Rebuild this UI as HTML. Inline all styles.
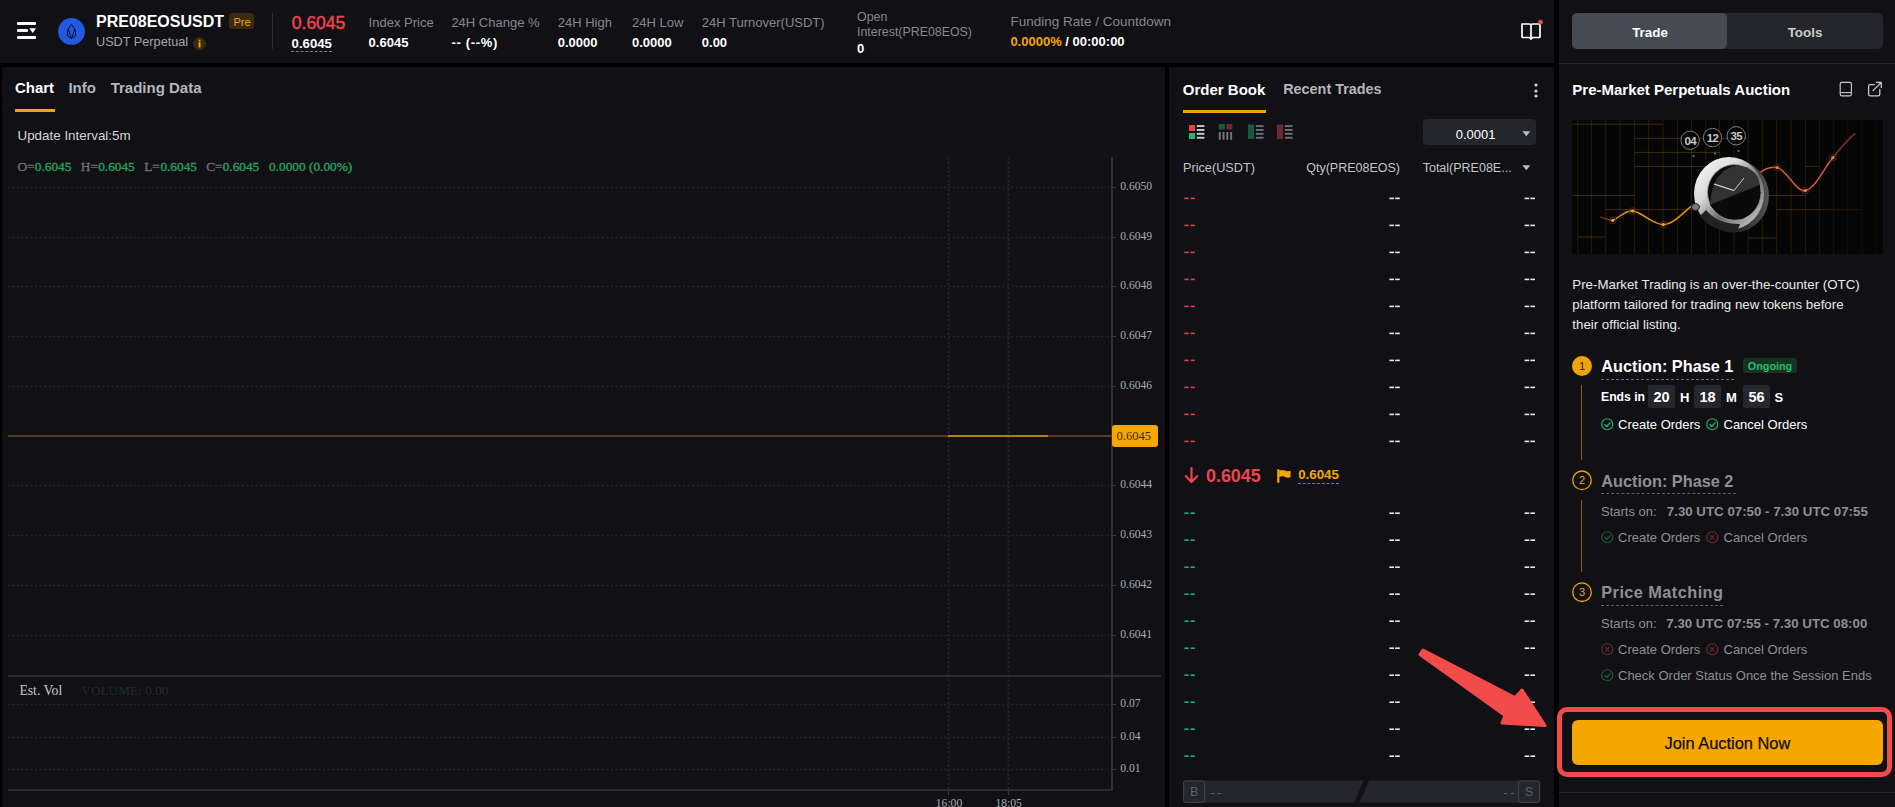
<!DOCTYPE html>
<html><head><meta charset="utf-8"><title>PRE08EOSUSDT</title>
<style>
html,body{margin:0;padding:0;}
body{width:1895px;height:807px;overflow:hidden;background:#000;position:relative;font-family:'Liberation Sans', sans-serif;}
.t{position:absolute;white-space:nowrap;}
.r{position:absolute;}
svg{position:absolute;overflow:visible;}
</style></head><body>

<div class="r" style="left:0px;top:0px;width:1554px;height:63px;background:#111115;"></div>
<div class="r" style="left:2px;top:67px;width:1163px;height:740px;background:#111115;"></div>
<div class="r" style="left:1169px;top:67px;width:385px;height:740px;background:#111115;"></div>
<div class="r" style="left:1559px;top:0px;width:336px;height:807px;background:#111115;"></div>
<div class="r" style="left:17px;top:22px;width:19px;height:2.5px;background:#fff;border-radius:1px;"></div>
<div class="r" style="left:17px;top:29.3px;width:11px;height:2.5px;background:#fff;border-radius:1px;"></div>
<div class="r" style="left:17px;top:36.3px;width:19px;height:2.5px;background:#fff;border-radius:1px;"></div>
<svg style="left:29px;top:27.8px" width="8" height="6"><path d="M0.3 0.3 L7.1 0.3 L3.7 5 Z" fill="#fff"/></svg>
<svg style="left:58px;top:18px" width="27" height="27" viewBox="0 0 27 27">
<circle cx="13.5" cy="13.4" r="13.4" fill="#2259e0"/>
<path d="M13.5 6.4 L10.1 11 L9.1 17.4 L13.5 20.5 L17.9 17.4 L16.9 11 Z M10.1 11 L13.5 20.5 L16.9 11" fill="none" stroke="#06091a" stroke-width="0.95" stroke-linejoin="round"/>
</svg>
<div class="t" style="left:96px;top:13.56px;font-size:16px;line-height:16px;color:#fff;font-weight:bold;font-family:'Liberation Sans', sans-serif;">PRE08EOSUSDT</div>
<div class="r" style="left:229px;top:13px;width:25px;height:16px;background:#3a2a0e;border-radius:3px;"></div>
<div class="t" style="left:233.5px;top:16.96px;font-size:11px;line-height:11px;color:#f7a600;font-weight:normal;font-family:'Liberation Sans', sans-serif;">Pre</div>
<div class="t" style="left:96px;top:36.19px;font-size:12.7px;line-height:12.7px;color:#a3a5aa;font-weight:normal;font-family:'Liberation Sans', sans-serif;">USDT Perpetual</div>
<svg style="left:192.5px;top:37px" width="13" height="13"><circle cx="6.5" cy="6.5" r="6.5" fill="#3a2a0e"/><rect x="5.6" y="5.2" width="1.9" height="5.3" fill="#f7a600"/><rect x="5.6" y="2.6" width="1.9" height="1.8" fill="#f7a600"/></svg>
<div class="r" style="left:272px;top:13px;width:1px;height:36px;background:#2c2d33;"></div>
<div class="t" style="left:291.8px;top:15.33px;font-size:17.5px;line-height:17.5px;color:#f0434f;font-weight:normal;font-family:'Liberation Sans', sans-serif;-webkit-text-stroke:0.45px #f0434f;">0.6045</div>
<div class="t" style="left:291.6px;top:37.21px;font-size:13.2px;line-height:13.2px;color:#fff;font-weight:bold;font-family:'Liberation Sans', sans-serif;">0.6045</div>
<div class="r" style="left:291px;top:51px;width:41px;height:0;border-top:1px dashed #7a7c82"></div>
<div class="t" style="left:368.6px;top:15.54px;font-size:13px;line-height:13px;color:#85878d;font-weight:normal;font-family:'Liberation Sans', sans-serif;">Index Price</div>
<div class="t" style="left:368.6px;top:35.54px;font-size:13px;line-height:13px;color:#fff;font-weight:bold;font-family:'Liberation Sans', sans-serif;">0.6045</div>
<div class="t" style="left:451.4px;top:15.54px;font-size:13px;line-height:13px;color:#85878d;font-weight:normal;font-family:'Liberation Sans', sans-serif;">24H Change %</div>
<div class="t" style="left:451.4px;top:35.54px;font-size:13px;line-height:13px;color:#fff;font-weight:bold;font-family:'Liberation Sans', sans-serif;letter-spacing:0.7px;">-- (--%)</div>
<div class="t" style="left:557.7px;top:15.54px;font-size:13px;line-height:13px;color:#85878d;font-weight:normal;font-family:'Liberation Sans', sans-serif;">24H High</div>
<div class="t" style="left:557.7px;top:35.54px;font-size:13px;line-height:13px;color:#fff;font-weight:bold;font-family:'Liberation Sans', sans-serif;">0.0000</div>
<div class="t" style="left:632px;top:15.54px;font-size:13px;line-height:13px;color:#85878d;font-weight:normal;font-family:'Liberation Sans', sans-serif;">24H Low</div>
<div class="t" style="left:632px;top:35.54px;font-size:13px;line-height:13px;color:#fff;font-weight:bold;font-family:'Liberation Sans', sans-serif;">0.0000</div>
<div class="t" style="left:701.8px;top:15.54px;font-size:13px;line-height:13px;color:#85878d;font-weight:normal;font-family:'Liberation Sans', sans-serif;">24H Turnover(USDT)</div>
<div class="t" style="left:701.8px;top:35.54px;font-size:13px;line-height:13px;color:#fff;font-weight:bold;font-family:'Liberation Sans', sans-serif;">0.00</div>
<div class="t" style="left:857px;top:11.13px;font-size:12.4px;line-height:12.4px;color:#85878d;font-weight:normal;font-family:'Liberation Sans', sans-serif;">Open</div>
<div class="t" style="left:857px;top:25.53px;font-size:12.4px;line-height:12.4px;color:#85878d;font-weight:normal;font-family:'Liberation Sans', sans-serif;">Interest(PRE08EOS)</div>
<div class="t" style="left:857px;top:42.44px;font-size:13px;line-height:13px;color:#fff;font-weight:bold;font-family:'Liberation Sans', sans-serif;">0</div>
<div class="t" style="left:1010.4px;top:15.46px;font-size:13.5px;line-height:13.5px;color:#85878d;font-weight:normal;font-family:'Liberation Sans', sans-serif;">Funding Rate / Countdown</div>
<div class="t" style="left:1010.4px;top:35.34px;font-size:13px;line-height:13px;color:#fff;font-weight:bold;font-family:'Liberation Sans', sans-serif;"><span style="color:#f7a600">0.0000%</span> / 00:00:00</div>
<svg style="left:1520px;top:20px" width="24" height="22" viewBox="0 0 24 22">
<path d="M2 4 H9.5 Q11 4 11 5.5 V17.5 H2.8 Q2 17.5 2 16.7 Z M11 5.5 Q11 4 12.5 4 H19.2 Q20 4 20 4.8 V16.7 Q20 17.5 19.2 17.5 H11" fill="none" stroke="#fff" stroke-width="1.7" stroke-linejoin="round"/>
<path d="M9.3 17.5 L11 19.2 L12.7 17.5" fill="none" stroke="#fff" stroke-width="1.5"/>
<circle cx="20.5" cy="2.2" r="2.4" fill="#f0434f"/>
</svg>
<div class="t" style="left:14.9px;top:80.42px;font-size:15px;line-height:15px;color:#fff;font-weight:bold;font-family:'Liberation Sans', sans-serif;">Chart</div>
<div class="t" style="left:68.4px;top:80.42px;font-size:15px;line-height:15px;color:#b4b6bb;font-weight:bold;font-family:'Liberation Sans', sans-serif;">Info</div>
<div class="t" style="left:110.7px;top:80.42px;font-size:15px;line-height:15px;color:#b4b6bb;font-weight:bold;font-family:'Liberation Sans', sans-serif;">Trading Data</div>
<div class="r" style="left:15px;top:109px;width:39.5px;height:3px;background:#f0a30a;"></div>
<div class="t" style="left:17.5px;top:129.18px;font-size:13.4px;line-height:13.4px;color:#d2d4d8;font-weight:normal;font-family:'Liberation Sans', sans-serif;">Update Interval:5m</div>
<div class="t" style="left:17.5px;top:159.57px;font-size:13.3px;line-height:13.3px;color:#6c6f76;font-weight:normal;font-family:'Liberation Serif', serif;-webkit-text-stroke:0.35px #6c6f76;">O=</div>
<div class="t" style="left:34.8px;top:159.57px;font-size:13.3px;line-height:13.3px;color:#25a35e;font-weight:normal;font-family:'Liberation Serif', serif;-webkit-text-stroke:0.35px #25a35e;">0.6045</div>
<div class="t" style="left:80.8px;top:159.57px;font-size:13.3px;line-height:13.3px;color:#6c6f76;font-weight:normal;font-family:'Liberation Serif', serif;-webkit-text-stroke:0.35px #6c6f76;">H=</div>
<div class="t" style="left:98.2px;top:159.57px;font-size:13.3px;line-height:13.3px;color:#25a35e;font-weight:normal;font-family:'Liberation Serif', serif;-webkit-text-stroke:0.35px #25a35e;">0.6045</div>
<div class="t" style="left:144.2px;top:159.57px;font-size:13.3px;line-height:13.3px;color:#6c6f76;font-weight:normal;font-family:'Liberation Serif', serif;-webkit-text-stroke:0.35px #6c6f76;">L=</div>
<div class="t" style="left:160.4px;top:159.57px;font-size:13.3px;line-height:13.3px;color:#25a35e;font-weight:normal;font-family:'Liberation Serif', serif;-webkit-text-stroke:0.35px #25a35e;">0.6045</div>
<div class="t" style="left:206.2px;top:159.57px;font-size:13.3px;line-height:13.3px;color:#6c6f76;font-weight:normal;font-family:'Liberation Serif', serif;-webkit-text-stroke:0.35px #6c6f76;">C=</div>
<div class="t" style="left:222.7px;top:159.57px;font-size:13.3px;line-height:13.3px;color:#25a35e;font-weight:normal;font-family:'Liberation Serif', serif;-webkit-text-stroke:0.35px #25a35e;">0.6045</div>
<div class="t" style="left:269.1px;top:159.57px;font-size:13.3px;line-height:13.3px;color:#25a35e;font-weight:normal;font-family:'Liberation Serif', serif;-webkit-text-stroke:0.35px #25a35e;">0.0000 (0.00%)</div>
<svg style="left:0;top:0" width="1895" height="807"><line x1="8" y1="187.5" x2="1112" y2="187.5" stroke="#232429" stroke-width="1.3" stroke-dasharray="2 2.5"/><line x1="1112" y1="187.5" x2="1116" y2="187.5" stroke="#3a3b40" stroke-width="1"/><line x1="8" y1="237.5" x2="1112" y2="237.5" stroke="#232429" stroke-width="1.3" stroke-dasharray="2 2.5"/><line x1="1112" y1="237.5" x2="1116" y2="237.5" stroke="#3a3b40" stroke-width="1"/><line x1="8" y1="286.5" x2="1112" y2="286.5" stroke="#232429" stroke-width="1.3" stroke-dasharray="2 2.5"/><line x1="1112" y1="286.5" x2="1116" y2="286.5" stroke="#3a3b40" stroke-width="1"/><line x1="8" y1="336.5" x2="1112" y2="336.5" stroke="#232429" stroke-width="1.3" stroke-dasharray="2 2.5"/><line x1="1112" y1="336.5" x2="1116" y2="336.5" stroke="#3a3b40" stroke-width="1"/><line x1="8" y1="386.5" x2="1112" y2="386.5" stroke="#232429" stroke-width="1.3" stroke-dasharray="2 2.5"/><line x1="1112" y1="386.5" x2="1116" y2="386.5" stroke="#3a3b40" stroke-width="1"/><line x1="8" y1="436.5" x2="1112" y2="436.5" stroke="#232429" stroke-width="1.3" stroke-dasharray="2 2.5"/><line x1="8" y1="485.5" x2="1112" y2="485.5" stroke="#232429" stroke-width="1.3" stroke-dasharray="2 2.5"/><line x1="1112" y1="485.5" x2="1116" y2="485.5" stroke="#3a3b40" stroke-width="1"/><line x1="8" y1="535.5" x2="1112" y2="535.5" stroke="#232429" stroke-width="1.3" stroke-dasharray="2 2.5"/><line x1="1112" y1="535.5" x2="1116" y2="535.5" stroke="#3a3b40" stroke-width="1"/><line x1="8" y1="585.5" x2="1112" y2="585.5" stroke="#232429" stroke-width="1.3" stroke-dasharray="2 2.5"/><line x1="1112" y1="585.5" x2="1116" y2="585.5" stroke="#3a3b40" stroke-width="1"/><line x1="8" y1="635.5" x2="1112" y2="635.5" stroke="#232429" stroke-width="1.3" stroke-dasharray="2 2.5"/><line x1="1112" y1="635.5" x2="1116" y2="635.5" stroke="#3a3b40" stroke-width="1"/><line x1="8" y1="704.5" x2="1112" y2="704.5" stroke="#232429" stroke-width="1.3" stroke-dasharray="2 2.5"/><line x1="1112" y1="704.5" x2="1116" y2="704.5" stroke="#3a3b40" stroke-width="1"/><line x1="8" y1="737.5" x2="1112" y2="737.5" stroke="#232429" stroke-width="1.3" stroke-dasharray="2 2.5"/><line x1="1112" y1="737.5" x2="1116" y2="737.5" stroke="#3a3b40" stroke-width="1"/><line x1="8" y1="769.5" x2="1112" y2="769.5" stroke="#232429" stroke-width="1.3" stroke-dasharray="2 2.5"/><line x1="1112" y1="769.5" x2="1116" y2="769.5" stroke="#3a3b40" stroke-width="1"/><line x1="948.5" y1="157" x2="948.5" y2="789" stroke="#22232a" stroke-width="2" stroke-dasharray="2.5 2"/><line x1="948.5" y1="790" x2="948.5" y2="795" stroke="#3a3b40" stroke-width="1"/><line x1="1008.5" y1="157" x2="1008.5" y2="789" stroke="#22232a" stroke-width="2" stroke-dasharray="2.5 2"/><line x1="1008.5" y1="790" x2="1008.5" y2="795" stroke="#3a3b40" stroke-width="1"/><line x1="1112" y1="157" x2="1112" y2="790" stroke="#35363b" stroke-width="1.8"/><line x1="8" y1="676" x2="1161" y2="676" stroke="#35363b" stroke-width="1.6"/><line x1="8" y1="790" x2="1113" y2="790" stroke="#35363b" stroke-width="1.6"/><line x1="8" y1="436" x2="1112" y2="436" stroke="#55401a" stroke-width="2"/><line x1="948" y1="436" x2="1048" y2="436" stroke="#b57d12" stroke-width="2"/></svg>
<div class="t" style="left:1120.2px;top:181.38px;font-size:11.6px;line-height:11.6px;color:#a9abb0;font-weight:normal;font-family:'Liberation Serif', serif;">0.6050</div>
<div class="t" style="left:1120.2px;top:231.38px;font-size:11.6px;line-height:11.6px;color:#a9abb0;font-weight:normal;font-family:'Liberation Serif', serif;">0.6049</div>
<div class="t" style="left:1120.2px;top:280.38px;font-size:11.6px;line-height:11.6px;color:#a9abb0;font-weight:normal;font-family:'Liberation Serif', serif;">0.6048</div>
<div class="t" style="left:1120.2px;top:330.38px;font-size:11.6px;line-height:11.6px;color:#a9abb0;font-weight:normal;font-family:'Liberation Serif', serif;">0.6047</div>
<div class="t" style="left:1120.2px;top:380.38px;font-size:11.6px;line-height:11.6px;color:#a9abb0;font-weight:normal;font-family:'Liberation Serif', serif;">0.6046</div>
<div class="t" style="left:1120.2px;top:479.38px;font-size:11.6px;line-height:11.6px;color:#a9abb0;font-weight:normal;font-family:'Liberation Serif', serif;">0.6044</div>
<div class="t" style="left:1120.2px;top:529.38px;font-size:11.6px;line-height:11.6px;color:#a9abb0;font-weight:normal;font-family:'Liberation Serif', serif;">0.6043</div>
<div class="t" style="left:1120.2px;top:579.38px;font-size:11.6px;line-height:11.6px;color:#a9abb0;font-weight:normal;font-family:'Liberation Serif', serif;">0.6042</div>
<div class="t" style="left:1120.2px;top:629.38px;font-size:11.6px;line-height:11.6px;color:#a9abb0;font-weight:normal;font-family:'Liberation Serif', serif;">0.6041</div>
<div class="t" style="left:1120.2px;top:698.38px;font-size:11.6px;line-height:11.6px;color:#a9abb0;font-weight:normal;font-family:'Liberation Serif', serif;">0.07</div>
<div class="t" style="left:1120.2px;top:731.38px;font-size:11.6px;line-height:11.6px;color:#a9abb0;font-weight:normal;font-family:'Liberation Serif', serif;">0.04</div>
<div class="t" style="left:1120.2px;top:763.38px;font-size:11.6px;line-height:11.6px;color:#a9abb0;font-weight:normal;font-family:'Liberation Serif', serif;">0.01</div>
<div class="r" style="left:1111.6px;top:424.8px;width:46.4px;height:22.4px;background:#f7a600;border-radius:3px;"></div>
<div class="t" style="left:1116.5px;top:430.22px;font-size:12.5px;line-height:12.5px;color:#3a2a08;font-weight:normal;font-family:'Liberation Serif', serif;">0.6045</div>
<div class="t" style="left:949px;transform:translateX(-50%);top:798.38px;font-size:11.6px;line-height:11.6px;color:#a9abb0;font-weight:normal;font-family:'Liberation Serif', serif;">16:00</div>
<div class="t" style="left:1008.6px;transform:translateX(-50%);top:798.38px;font-size:11.6px;line-height:11.6px;color:#a9abb0;font-weight:normal;font-family:'Liberation Serif', serif;">18:05</div>
<div class="t" style="left:19.4px;top:684.00px;font-size:13.7px;line-height:13.7px;color:#c4c5c9;font-weight:normal;font-family:'Liberation Serif', serif;">Est. Vol</div>
<div class="t" style="left:81.3px;top:684.07px;font-size:13.3px;line-height:13.3px;color:#1a2f23;font-weight:normal;font-family:'Liberation Serif', serif;">VOLUME: 0.00</div>
<div class="t" style="left:1182.8px;top:81.72px;font-size:15px;line-height:15px;color:#fff;font-weight:bold;font-family:'Liberation Sans', sans-serif;">Order Book</div>
<div class="t" style="left:1283.2px;top:82.42px;font-size:14.4px;line-height:14.4px;color:#b4b6bb;font-weight:bold;font-family:'Liberation Sans', sans-serif;">Recent Trades</div>
<div class="r" style="left:1183px;top:110px;width:82.5px;height:2.6px;background:#f0a30a;"></div>
<svg style="left:1533.5px;top:83px" width="4" height="4"><circle cx="2" cy="2" r="1.6" fill="#d0d2d6"/></svg>
<svg style="left:1533.5px;top:88.5px" width="4" height="4"><circle cx="2" cy="2" r="1.6" fill="#d0d2d6"/></svg>
<svg style="left:1533.5px;top:94px" width="4" height="4"><circle cx="2" cy="2" r="1.6" fill="#d0d2d6"/></svg>
<svg style="left:0;top:0" width="1895" height="807"><rect x="1189" y="125" width="6" height="6" fill="#e9404a"/><rect x="1189" y="133" width="6" height="6" fill="#25b673"/><rect x="1196.8" y="125.1" width="7.6" height="1.9" fill="#c9cbd0"/><rect x="1196.8" y="129.0" width="7.6" height="1.9" fill="#c9cbd0"/><rect x="1196.8" y="132.9" width="7.6" height="1.9" fill="#c9cbd0"/><rect x="1196.8" y="136.8" width="7.6" height="1.9" fill="#c9cbd0"/><rect x="1218.8" y="124" width="6" height="5.5" fill="#195a3b"/><rect x="1226.4" y="124" width="6" height="5.5" fill="#6c2a2e"/><rect x="1218.8" y="132" width="1.9" height="7.8" fill="#76787d"/><rect x="1222.6" y="132" width="1.9" height="7.8" fill="#76787d"/><rect x="1226.4" y="132" width="1.9" height="7.8" fill="#76787d"/><rect x="1230.2" y="132" width="1.9" height="7.8" fill="#76787d"/><rect x="1248" y="124.5" width="6" height="14.5" fill="#195a3b"/><rect x="1255.8" y="125.1" width="7.8" height="1.9" fill="#6f7176"/><rect x="1255.8" y="129.0" width="7.8" height="1.9" fill="#6f7176"/><rect x="1255.8" y="132.9" width="7.8" height="1.9" fill="#6f7176"/><rect x="1255.8" y="136.8" width="7.8" height="1.9" fill="#6f7176"/><rect x="1277" y="124.5" width="6" height="14.5" fill="#6c2a2e"/><rect x="1284.8" y="125.1" width="7.8" height="1.9" fill="#6f7176"/><rect x="1284.8" y="129.0" width="7.8" height="1.9" fill="#6f7176"/><rect x="1284.8" y="132.9" width="7.8" height="1.9" fill="#6f7176"/><rect x="1284.8" y="136.8" width="7.8" height="1.9" fill="#6f7176"/></svg>
<div class="r" style="left:1423.2px;top:118.7px;width:112.8px;height:26.8px;background:#24262b;border-radius:4px;"></div>
<div class="t" style="left:1455.7px;top:127.64px;font-size:13px;line-height:13px;color:#fff;font-weight:normal;font-family:'Liberation Sans', sans-serif;">0.0001</div>
<svg style="left:1521.5px;top:130.5px" width="9" height="6"><path d="M0.3 0.3 H8.3 L4.3 5.2 Z" fill="#b8bac0"/></svg>
<div class="t" style="left:1183px;top:161.79px;font-size:12.7px;line-height:12.7px;color:#c2c4c9;font-weight:normal;font-family:'Liberation Sans', sans-serif;">Price(USDT)</div>
<div class="t" style="left:1306.2px;top:161.82px;font-size:12.5px;line-height:12.5px;color:#c2c4c9;font-weight:normal;font-family:'Liberation Sans', sans-serif;">Qty(PRE08EOS)</div>
<div class="t" style="left:1422.7px;top:161.82px;font-size:12.5px;line-height:12.5px;color:#c2c4c9;font-weight:normal;font-family:'Liberation Sans', sans-serif;">Total(PRE08E...</div>
<svg style="left:1521.5px;top:164.5px" width="9" height="6"><path d="M0.3 0.3 H8.3 L4.3 5.2 Z" fill="#b8bac0"/></svg>
<svg style="left:0;top:0" width="1895" height="807"><rect x="1184.4" y="197.6" width="4.20" height="1.6" fill="#d8434c"/><rect x="1190.60" y="197.6" width="4.20" height="1.6" fill="#d8434c"/><rect x="1389.4" y="197.6" width="4.60" height="1.6" fill="#e8e8ea"/><rect x="1395.20" y="197.6" width="4.60" height="1.6" fill="#e8e8ea"/><rect x="1524.6" y="197.6" width="4.60" height="1.6" fill="#e8e8ea"/><rect x="1530.40" y="197.6" width="4.60" height="1.6" fill="#e8e8ea"/><rect x="1184.4" y="224.6" width="4.20" height="1.6" fill="#d8434c"/><rect x="1190.60" y="224.6" width="4.20" height="1.6" fill="#d8434c"/><rect x="1389.4" y="224.6" width="4.60" height="1.6" fill="#e8e8ea"/><rect x="1395.20" y="224.6" width="4.60" height="1.6" fill="#e8e8ea"/><rect x="1524.6" y="224.6" width="4.60" height="1.6" fill="#e8e8ea"/><rect x="1530.40" y="224.6" width="4.60" height="1.6" fill="#e8e8ea"/><rect x="1184.4" y="251.6" width="4.20" height="1.6" fill="#d8434c"/><rect x="1190.60" y="251.6" width="4.20" height="1.6" fill="#d8434c"/><rect x="1389.4" y="251.6" width="4.60" height="1.6" fill="#e8e8ea"/><rect x="1395.20" y="251.6" width="4.60" height="1.6" fill="#e8e8ea"/><rect x="1524.6" y="251.6" width="4.60" height="1.6" fill="#e8e8ea"/><rect x="1530.40" y="251.6" width="4.60" height="1.6" fill="#e8e8ea"/><rect x="1184.4" y="278.6" width="4.20" height="1.6" fill="#d8434c"/><rect x="1190.60" y="278.6" width="4.20" height="1.6" fill="#d8434c"/><rect x="1389.4" y="278.6" width="4.60" height="1.6" fill="#e8e8ea"/><rect x="1395.20" y="278.6" width="4.60" height="1.6" fill="#e8e8ea"/><rect x="1524.6" y="278.6" width="4.60" height="1.6" fill="#e8e8ea"/><rect x="1530.40" y="278.6" width="4.60" height="1.6" fill="#e8e8ea"/><rect x="1184.4" y="305.6" width="4.20" height="1.6" fill="#d8434c"/><rect x="1190.60" y="305.6" width="4.20" height="1.6" fill="#d8434c"/><rect x="1389.4" y="305.6" width="4.60" height="1.6" fill="#e8e8ea"/><rect x="1395.20" y="305.6" width="4.60" height="1.6" fill="#e8e8ea"/><rect x="1524.6" y="305.6" width="4.60" height="1.6" fill="#e8e8ea"/><rect x="1530.40" y="305.6" width="4.60" height="1.6" fill="#e8e8ea"/><rect x="1184.4" y="332.6" width="4.20" height="1.6" fill="#d8434c"/><rect x="1190.60" y="332.6" width="4.20" height="1.6" fill="#d8434c"/><rect x="1389.4" y="332.6" width="4.60" height="1.6" fill="#e8e8ea"/><rect x="1395.20" y="332.6" width="4.60" height="1.6" fill="#e8e8ea"/><rect x="1524.6" y="332.6" width="4.60" height="1.6" fill="#e8e8ea"/><rect x="1530.40" y="332.6" width="4.60" height="1.6" fill="#e8e8ea"/><rect x="1184.4" y="359.6" width="4.20" height="1.6" fill="#d8434c"/><rect x="1190.60" y="359.6" width="4.20" height="1.6" fill="#d8434c"/><rect x="1389.4" y="359.6" width="4.60" height="1.6" fill="#e8e8ea"/><rect x="1395.20" y="359.6" width="4.60" height="1.6" fill="#e8e8ea"/><rect x="1524.6" y="359.6" width="4.60" height="1.6" fill="#e8e8ea"/><rect x="1530.40" y="359.6" width="4.60" height="1.6" fill="#e8e8ea"/><rect x="1184.4" y="386.6" width="4.20" height="1.6" fill="#d8434c"/><rect x="1190.60" y="386.6" width="4.20" height="1.6" fill="#d8434c"/><rect x="1389.4" y="386.6" width="4.60" height="1.6" fill="#e8e8ea"/><rect x="1395.20" y="386.6" width="4.60" height="1.6" fill="#e8e8ea"/><rect x="1524.6" y="386.6" width="4.60" height="1.6" fill="#e8e8ea"/><rect x="1530.40" y="386.6" width="4.60" height="1.6" fill="#e8e8ea"/><rect x="1184.4" y="413.6" width="4.20" height="1.6" fill="#d8434c"/><rect x="1190.60" y="413.6" width="4.20" height="1.6" fill="#d8434c"/><rect x="1389.4" y="413.6" width="4.60" height="1.6" fill="#e8e8ea"/><rect x="1395.20" y="413.6" width="4.60" height="1.6" fill="#e8e8ea"/><rect x="1524.6" y="413.6" width="4.60" height="1.6" fill="#e8e8ea"/><rect x="1530.40" y="413.6" width="4.60" height="1.6" fill="#e8e8ea"/><rect x="1184.4" y="440.6" width="4.20" height="1.6" fill="#d8434c"/><rect x="1190.60" y="440.6" width="4.20" height="1.6" fill="#d8434c"/><rect x="1389.4" y="440.6" width="4.60" height="1.6" fill="#e8e8ea"/><rect x="1395.20" y="440.6" width="4.60" height="1.6" fill="#e8e8ea"/><rect x="1524.6" y="440.6" width="4.60" height="1.6" fill="#e8e8ea"/><rect x="1530.40" y="440.6" width="4.60" height="1.6" fill="#e8e8ea"/><rect x="1184.4" y="512.4" width="4.20" height="1.6" fill="#22b06e"/><rect x="1190.60" y="512.4" width="4.20" height="1.6" fill="#22b06e"/><rect x="1389.4" y="512.4" width="4.60" height="1.6" fill="#e8e8ea"/><rect x="1395.20" y="512.4" width="4.60" height="1.6" fill="#e8e8ea"/><rect x="1524.6" y="512.4" width="4.60" height="1.6" fill="#e8e8ea"/><rect x="1530.40" y="512.4" width="4.60" height="1.6" fill="#e8e8ea"/><rect x="1184.4" y="539.4" width="4.20" height="1.6" fill="#22b06e"/><rect x="1190.60" y="539.4" width="4.20" height="1.6" fill="#22b06e"/><rect x="1389.4" y="539.4" width="4.60" height="1.6" fill="#e8e8ea"/><rect x="1395.20" y="539.4" width="4.60" height="1.6" fill="#e8e8ea"/><rect x="1524.6" y="539.4" width="4.60" height="1.6" fill="#e8e8ea"/><rect x="1530.40" y="539.4" width="4.60" height="1.6" fill="#e8e8ea"/><rect x="1184.4" y="566.4" width="4.20" height="1.6" fill="#22b06e"/><rect x="1190.60" y="566.4" width="4.20" height="1.6" fill="#22b06e"/><rect x="1389.4" y="566.4" width="4.60" height="1.6" fill="#e8e8ea"/><rect x="1395.20" y="566.4" width="4.60" height="1.6" fill="#e8e8ea"/><rect x="1524.6" y="566.4" width="4.60" height="1.6" fill="#e8e8ea"/><rect x="1530.40" y="566.4" width="4.60" height="1.6" fill="#e8e8ea"/><rect x="1184.4" y="593.4" width="4.20" height="1.6" fill="#22b06e"/><rect x="1190.60" y="593.4" width="4.20" height="1.6" fill="#22b06e"/><rect x="1389.4" y="593.4" width="4.60" height="1.6" fill="#e8e8ea"/><rect x="1395.20" y="593.4" width="4.60" height="1.6" fill="#e8e8ea"/><rect x="1524.6" y="593.4" width="4.60" height="1.6" fill="#e8e8ea"/><rect x="1530.40" y="593.4" width="4.60" height="1.6" fill="#e8e8ea"/><rect x="1184.4" y="620.4" width="4.20" height="1.6" fill="#22b06e"/><rect x="1190.60" y="620.4" width="4.20" height="1.6" fill="#22b06e"/><rect x="1389.4" y="620.4" width="4.60" height="1.6" fill="#e8e8ea"/><rect x="1395.20" y="620.4" width="4.60" height="1.6" fill="#e8e8ea"/><rect x="1524.6" y="620.4" width="4.60" height="1.6" fill="#e8e8ea"/><rect x="1530.40" y="620.4" width="4.60" height="1.6" fill="#e8e8ea"/><rect x="1184.4" y="647.4" width="4.20" height="1.6" fill="#22b06e"/><rect x="1190.60" y="647.4" width="4.20" height="1.6" fill="#22b06e"/><rect x="1389.4" y="647.4" width="4.60" height="1.6" fill="#e8e8ea"/><rect x="1395.20" y="647.4" width="4.60" height="1.6" fill="#e8e8ea"/><rect x="1524.6" y="647.4" width="4.60" height="1.6" fill="#e8e8ea"/><rect x="1530.40" y="647.4" width="4.60" height="1.6" fill="#e8e8ea"/><rect x="1184.4" y="674.4" width="4.20" height="1.6" fill="#22b06e"/><rect x="1190.60" y="674.4" width="4.20" height="1.6" fill="#22b06e"/><rect x="1389.4" y="674.4" width="4.60" height="1.6" fill="#e8e8ea"/><rect x="1395.20" y="674.4" width="4.60" height="1.6" fill="#e8e8ea"/><rect x="1524.6" y="674.4" width="4.60" height="1.6" fill="#e8e8ea"/><rect x="1530.40" y="674.4" width="4.60" height="1.6" fill="#e8e8ea"/><rect x="1184.4" y="701.4" width="4.20" height="1.6" fill="#22b06e"/><rect x="1190.60" y="701.4" width="4.20" height="1.6" fill="#22b06e"/><rect x="1389.4" y="701.4" width="4.60" height="1.6" fill="#e8e8ea"/><rect x="1395.20" y="701.4" width="4.60" height="1.6" fill="#e8e8ea"/><rect x="1524.6" y="701.4" width="4.60" height="1.6" fill="#e8e8ea"/><rect x="1530.40" y="701.4" width="4.60" height="1.6" fill="#e8e8ea"/><rect x="1184.4" y="728.4" width="4.20" height="1.6" fill="#22b06e"/><rect x="1190.60" y="728.4" width="4.20" height="1.6" fill="#22b06e"/><rect x="1389.4" y="728.4" width="4.60" height="1.6" fill="#e8e8ea"/><rect x="1395.20" y="728.4" width="4.60" height="1.6" fill="#e8e8ea"/><rect x="1524.6" y="728.4" width="4.60" height="1.6" fill="#e8e8ea"/><rect x="1530.40" y="728.4" width="4.60" height="1.6" fill="#e8e8ea"/><rect x="1184.4" y="755.4" width="4.20" height="1.6" fill="#22b06e"/><rect x="1190.60" y="755.4" width="4.20" height="1.6" fill="#22b06e"/><rect x="1389.4" y="755.4" width="4.60" height="1.6" fill="#e8e8ea"/><rect x="1395.20" y="755.4" width="4.60" height="1.6" fill="#e8e8ea"/><rect x="1524.6" y="755.4" width="4.60" height="1.6" fill="#e8e8ea"/><rect x="1530.40" y="755.4" width="4.60" height="1.6" fill="#e8e8ea"/></svg>
<svg style="left:1184px;top:467px" width="16" height="17"><path d="M7.5 1 V15 M1.8 9.2 L7.5 15 L13.2 9.2" fill="none" stroke="#f0434f" stroke-width="2.2" stroke-linecap="round" stroke-linejoin="round"/></svg>
<div class="t" style="left:1206px;top:467.76px;font-size:17.9px;line-height:17.9px;color:#f0434f;font-weight:bold;font-family:'Liberation Sans', sans-serif;">0.6045</div>
<svg style="left:1277px;top:468.5px" width="15" height="14"><path d="M1.3 1 V13" stroke="#f7a600" stroke-width="2.2" stroke-linecap="round"/><path d="M2.2 1.5 Q5.5 0.4 8 1.6 Q10.5 2.8 13.5 1.8 V8.2 Q10.5 9.2 8 8 Q5.5 6.8 2.2 7.9 Z" fill="#f7a600"/></svg>
<div class="t" style="left:1298.2px;top:468.49px;font-size:13.3px;line-height:13.3px;color:#f7a600;font-weight:bold;font-family:'Liberation Sans', sans-serif;">0.6045</div>
<div class="r" style="left:1298px;top:483px;width:41px;height:0;border-top:1.5px dashed #a87410"></div>
<svg style="left:0;top:0" width="1895" height="807">
<path d="M1185 780.5 H1363.7 L1354 802.8 H1185 Q1183.2 802.8 1183.2 801 V782.3 Q1183.2 780.5 1185 780.5 Z" fill="#24262b"/>
<path d="M1369 780.5 H1538 Q1540 780.5 1540 782.5 V800.8 Q1540 802.8 1538 802.8 H1359.5 Z" fill="#24262b"/>
<rect x="1183.7" y="781" width="21" height="21.3" rx="2" fill="none" stroke="#44474e" stroke-width="1"/>
<rect x="1518.6" y="781" width="21" height="21.3" rx="2" fill="none" stroke="#44474e" stroke-width="1"/>
</svg>
<div class="t" style="left:1194.2px;transform:translateX(-50%);top:785.82px;font-size:12.5px;line-height:12.5px;color:#5f6268;font-weight:normal;font-family:'Liberation Sans', sans-serif;">B</div>
<div class="t" style="left:1529.1px;transform:translateX(-50%);top:785.82px;font-size:12.5px;line-height:12.5px;color:#5f6268;font-weight:normal;font-family:'Liberation Sans', sans-serif;">S</div>
<div class="t" style="left:1210.7px;top:787.06px;font-size:11px;line-height:11px;color:#6e7178;font-weight:normal;font-family:'Liberation Sans', sans-serif;">- -</div>
<div class="t" style="left:1503.6px;top:787.06px;font-size:11px;line-height:11px;color:#6e7178;font-weight:normal;font-family:'Liberation Sans', sans-serif;">- -</div>
<div class="r" style="left:1572px;top:13px;width:311px;height:36px;background:#24262b;border-radius:5px;"></div>
<div class="r" style="left:1572px;top:13px;width:155.2px;height:36px;background:#454a54;border-radius:5px;"></div>
<div class="t" style="left:1650px;transform:translateX(-50%);top:26.38px;font-size:13.4px;line-height:13.4px;color:#fff;font-weight:bold;font-family:'Liberation Sans', sans-serif;">Trade</div>
<div class="t" style="left:1805px;transform:translateX(-50%);top:26.38px;font-size:13.4px;line-height:13.4px;color:#c9cbd0;font-weight:bold;font-family:'Liberation Sans', sans-serif;">Tools</div>
<div class="r" style="left:1559px;top:63px;width:336px;height:1px;background:#26282d;"></div>
<div class="t" style="left:1572.3px;top:81.52px;font-size:15px;line-height:15px;color:#fff;font-weight:bold;font-family:'Liberation Sans', sans-serif;">Pre-Market Perpetuals Auction</div>
<svg style="left:1830px;top:75px" width="60" height="30" viewBox="1830 75 60 30">
<rect x="1840.2" y="82.3" width="11.2" height="13.6" rx="1.6" fill="none" stroke="#c6c8cd" stroke-width="1.15"/>
<line x1="1840.2" y1="92.6" x2="1851.4" y2="92.6" stroke="#c6c8cd" stroke-width="1.1"/>
<path d="M1874.5 84.6 H1870.2 Q1868.6 84.6 1868.6 86.2 V94.2 Q1868.6 95.8 1870.2 95.8 H1878.2 Q1879.8 95.8 1879.8 94.2 V89.5" fill="none" stroke="#c6c8cd" stroke-width="1.3" stroke-linecap="round"/>
<path d="M1873 90.6 L1880.9 82.7 M1876.3 82.4 H1881.3 V87.4" fill="none" stroke="#c6c8cd" stroke-width="1.3" stroke-linecap="round" stroke-linejoin="round"/>
</svg>
<svg style="left:1572px;top:120px" width="311" height="134" viewBox="0 0 311 134"><defs><linearGradient id="ring" x1="0" y1="0" x2="1" y2="1"><stop offset="0" stop-color="#ffffff"/><stop offset="0.35" stop-color="#d8d8d8"/><stop offset="0.6" stop-color="#6a6a6a"/><stop offset="1" stop-color="#e0e0e0"/></linearGradient><linearGradient id="depth" x1="0" y1="0" x2="1" y2="0"><stop offset="0" stop-color="#111"/><stop offset="0.6" stop-color="#2a2a2a"/><stop offset="1" stop-color="#555"/></linearGradient><linearGradient id="fade" x1="0" y1="0" x2="1" y2="0"><stop offset="0" stop-color="#050505" stop-opacity="0"/><stop offset="0.7" stop-color="#050505" stop-opacity="0"/><stop offset="1" stop-color="#050505" stop-opacity="0.85"/></linearGradient></defs><rect x="0" y="0" width="311" height="134" fill="#050505"/><line x1="5.8" y1="0" x2="5.8" y2="134" stroke="#2e1d08" stroke-width="0.9"/><line x1="19.6" y1="0" x2="19.6" y2="134" stroke="#2e1d08" stroke-width="0.9"/><line x1="33.7" y1="0" x2="33.7" y2="134" stroke="#2e1d08" stroke-width="0.9"/><line x1="48.1" y1="0" x2="48.1" y2="134" stroke="#2e1d08" stroke-width="0.9"/><line x1="62.6" y1="0" x2="62.6" y2="134" stroke="#2e1d08" stroke-width="0.9"/><line x1="76.7" y1="0" x2="76.7" y2="134" stroke="#2e1d08" stroke-width="0.9"/><line x1="91" y1="0" x2="91" y2="134" stroke="#2e1d08" stroke-width="0.9"/><line x1="105.4" y1="0" x2="105.4" y2="134" stroke="#2e1d08" stroke-width="0.9"/><line x1="119.5" y1="0" x2="119.5" y2="134" stroke="#2e1d08" stroke-width="0.9"/><line x1="133.8" y1="0" x2="133.8" y2="134" stroke="#2e1d08" stroke-width="0.9"/><line x1="147.6" y1="0" x2="147.6" y2="134" stroke="#2e1d08" stroke-width="0.9"/><line x1="162" y1="0" x2="162" y2="134" stroke="#2e1d08" stroke-width="0.9"/><line x1="176.2" y1="0" x2="176.2" y2="134" stroke="#2e1d08" stroke-width="0.9"/><line x1="190.3" y1="0" x2="190.3" y2="134" stroke="#2e1d08" stroke-width="0.9"/><line x1="204.7" y1="0" x2="204.7" y2="134" stroke="#2e1d08" stroke-width="0.9"/><line x1="219" y1="0" x2="219" y2="134" stroke="#2e1d08" stroke-width="0.9"/><line x1="233.4" y1="0" x2="233.4" y2="134" stroke="#2e1d08" stroke-width="0.9"/><line x1="247.6" y1="0" x2="247.6" y2="134" stroke="#2e1d08" stroke-width="0.9"/><line x1="261.7" y1="0" x2="261.7" y2="134" stroke="#2e1d08" stroke-width="0.9"/><line x1="275.8" y1="0" x2="275.8" y2="134" stroke="#2e1d08" stroke-width="0.9"/><line x1="289.9" y1="0" x2="289.9" y2="134" stroke="#2e1d08" stroke-width="0.9"/><line x1="304" y1="0" x2="304" y2="134" stroke="#2e1d08" stroke-width="0.9"/><line x1="0" y1="4.2" x2="91" y2="4.2" stroke="#442a0a" stroke-width="1"/><line x1="62.6" y1="18.3" x2="176" y2="18.3" stroke="#442a0a" stroke-width="1"/><line x1="62.6" y1="32.4" x2="148" y2="32.4" stroke="#442a0a" stroke-width="1"/><line x1="62.6" y1="46.5" x2="176" y2="46.5" stroke="#442a0a" stroke-width="1"/><line x1="0" y1="75.5" x2="62.6" y2="75.5" stroke="#442a0a" stroke-width="1"/><line x1="33.7" y1="89.6" x2="119.5" y2="89.6" stroke="#442a0a" stroke-width="1"/><line x1="5.8" y1="117" x2="33.7" y2="117" stroke="#442a0a" stroke-width="1"/><line x1="190.3" y1="75.5" x2="233.4" y2="75.5" stroke="#442a0a" stroke-width="1"/><line x1="204.7" y1="89.7" x2="290" y2="89.7" stroke="#442a0a" stroke-width="1"/><line x1="233.4" y1="46.5" x2="247.6" y2="46.5" stroke="#442a0a" stroke-width="1"/><line x1="176.2" y1="117.9" x2="204.7" y2="117.9" stroke="#442a0a" stroke-width="1"/><rect x="0" y="0" width="311" height="134" fill="url(#fade)"/><path d="M28 97 C33 98.5 37 100.5 40.7 100.4" fill="none" stroke="#6a4010" stroke-width="1.2"/><path d="M40.7 100.4 C47 98 53 90 60.6 91 C70 92 80 104 91.3 104.6 C102 104 112 92 119 86.3" fill="none" stroke="#e8900e" stroke-width="1.5"/><path d="M186 54 C192 49 198 46 205 47.5 C215 50 224 72 233 70.6 C243 69 252 48 261 37.6 C268 29 275 20 283 13.5" fill="none" stroke="#d65a3c" stroke-width="1.5"/><path d="M261 37.6 C268 29 275 20 283 13.5" fill="none" stroke="#5a2a1c" stroke-width="1.6"/><circle cx="40.7" cy="100.4" r="3.3" fill="none" stroke="#5a3410" stroke-width="0.8"/><circle cx="40.7" cy="100.4" r="1.6" fill="#f7a030"/><circle cx="60.6" cy="91" r="3.3" fill="none" stroke="#5a3410" stroke-width="0.8"/><circle cx="60.6" cy="91" r="1.6" fill="#f7a030"/><circle cx="91.3" cy="104.6" r="3.3" fill="none" stroke="#5a3410" stroke-width="0.8"/><circle cx="91.3" cy="104.6" r="1.6" fill="#f7a030"/><circle cx="205.2" cy="47.5" r="3.3" fill="none" stroke="#5a3410" stroke-width="0.8"/><circle cx="205.2" cy="47.5" r="1.6" fill="#f08040"/><circle cx="233.4" cy="70.6" r="3.3" fill="none" stroke="#5a3410" stroke-width="0.8"/><circle cx="233.4" cy="70.6" r="1.6" fill="#f08040"/><circle cx="260.8" cy="37.6" r="3.3" fill="none" stroke="#5a3410" stroke-width="0.8"/><circle cx="260.8" cy="37.6" r="1.6" fill="#f08040"/><ellipse cx="162" cy="76" rx="35" ry="36.5" fill="url(#depth)"/><ellipse cx="157" cy="73.5" rx="35" ry="36.5" fill="url(#ring)"/><ellipse cx="162.3" cy="72.4" rx="26.8" ry="27.8" fill="#0c0c0c" stroke="#9a9a9a" stroke-width="0.8"/><path d="M138 85 Q140 50 165 45.5 Q185 47 188 65 Z" fill="#333"/><path d="M138 85 L188 65 Q189 90 170 99 Q150 101 138 85 Z" fill="#0a0a0a"/><line x1="142" y1="64" x2="162" y2="70.5" stroke="#e8e8e8" stroke-width="1.1"/><line x1="162" y1="70.5" x2="172" y2="58" stroke="#d0d0d0" stroke-width="1"/><path d="M128 96 Q140 112 165 112 L168 104 Q145 104 134 90 Z" fill="#222"/><ellipse cx="123.5" cy="87" rx="4" ry="3.5" fill="#777" stroke="#222" stroke-width="1"/><circle cx="118.2" cy="20.3" r="9.2" fill="#050505" stroke="#8a8a8a" stroke-width="0.9"/><text x="118.2" y="24.5" font-family="Liberation Sans" font-weight="bold" font-size="11.5" fill="#c8c8c8" text-anchor="middle" letter-spacing="-0.6">04</text><circle cx="140.5" cy="17.6" r="9.2" fill="#050505" stroke="#8a8a8a" stroke-width="0.9"/><text x="140.5" y="21.8" font-family="Liberation Sans" font-weight="bold" font-size="11.5" fill="#c8c8c8" text-anchor="middle" letter-spacing="-0.6">12</text><circle cx="164.2" cy="15.8" r="9.2" fill="#050505" stroke="#8a8a8a" stroke-width="0.9"/><text x="164.2" y="20.0" font-family="Liberation Sans" font-weight="bold" font-size="11.5" fill="#c8c8c8" text-anchor="middle" letter-spacing="-0.6">35</text><rect x="120.5" y="35" width="2" height="2" fill="#666"/><rect x="142" y="32.5" width="2" height="2" fill="#666"/><rect x="165.5" y="30" width="2" height="2" fill="#666"/></svg>
<div class="t" style="left:1572.3px;top:277.99px;font-size:13.3px;line-height:13.3px;color:#e8e9eb;font-weight:normal;font-family:'Liberation Sans', sans-serif;">Pre-Market Trading is an over-the-counter (OTC)</div>
<div class="t" style="left:1572.3px;top:297.99px;font-size:13.3px;line-height:13.3px;color:#e8e9eb;font-weight:normal;font-family:'Liberation Sans', sans-serif;">platform tailored for trading new tokens before</div>
<div class="t" style="left:1572.3px;top:317.99px;font-size:13.3px;line-height:13.3px;color:#e8e9eb;font-weight:normal;font-family:'Liberation Sans', sans-serif;">their official listing.</div>
<div class="r" style="left:1581px;top:385px;width:1.2px;height:75px;background:#8a5e10;"></div>
<div class="r" style="left:1581px;top:500px;width:1.2px;height:72px;background:#8a5e10;"></div>
<svg style="left:1572px;top:356px" width="20" height="20"><circle cx="10" cy="10" r="10" fill="#f0a30a"/><text x="10" y="14" font-family="Liberation Sans" font-size="11" fill="#2a1c02" text-anchor="middle">1</text></svg>
<div class="t" style="left:1601.3px;top:357.92px;font-size:16.3px;line-height:16.3px;color:#fff;font-weight:bold;font-family:'Liberation Sans', sans-serif;">Auction: Phase 1</div>
<div class="r" style="left:1601px;top:379px;width:133px;height:0;border-top:1px dashed #6f7177"></div>
<div class="r" style="left:1743px;top:358px;width:54px;height:15px;background:#153223;border-radius:3px;"></div>
<div class="t" style="left:1770px;transform:translateX(-50%);top:361.19px;font-size:10.8px;line-height:10.8px;color:#2dbd6e;font-weight:bold;font-family:'Liberation Sans', sans-serif;">Ongoing</div>
<div class="t" style="left:1601px;top:391.37px;font-size:12.2px;line-height:12.2px;color:#fff;font-weight:bold;font-family:'Liberation Sans', sans-serif;">Ends in</div>
<div class="r" style="left:1648px;top:385px;width:27px;height:22.6px;background:#25272c;border-radius:2px;"></div>
<div class="t" style="left:1661.5px;transform:translateX(-50%);top:389.50px;font-size:14.5px;line-height:14.5px;color:#fff;font-weight:bold;font-family:'Liberation Sans', sans-serif;">20</div>
<div class="r" style="left:1694px;top:385px;width:27px;height:22.6px;background:#25272c;border-radius:2px;"></div>
<div class="t" style="left:1707.5px;transform:translateX(-50%);top:389.50px;font-size:14.5px;line-height:14.5px;color:#fff;font-weight:bold;font-family:'Liberation Sans', sans-serif;">18</div>
<div class="r" style="left:1743px;top:385px;width:27px;height:22.6px;background:#25272c;border-radius:2px;"></div>
<div class="t" style="left:1756.5px;transform:translateX(-50%);top:389.50px;font-size:14.5px;line-height:14.5px;color:#fff;font-weight:bold;font-family:'Liberation Sans', sans-serif;">56</div>
<div class="t" style="left:1680px;top:391.24px;font-size:13px;line-height:13px;color:#fff;font-weight:bold;font-family:'Liberation Sans', sans-serif;">H</div>
<div class="t" style="left:1726px;top:391.24px;font-size:13px;line-height:13px;color:#fff;font-weight:bold;font-family:'Liberation Sans', sans-serif;">M</div>
<div class="t" style="left:1774.5px;top:391.24px;font-size:13px;line-height:13px;color:#fff;font-weight:bold;font-family:'Liberation Sans', sans-serif;">S</div>
<svg style="left:1600.8px;top:418px" width="12.5" height="12.5" viewBox="0 0 12 12"><circle cx="6" cy="6" r="5.3" fill="none" stroke="#25b26b" stroke-width="1.1"/><path d="M3.6 6.3 L5.5 8.2 L8.8 4.6" fill="none" stroke="#25b26b" stroke-width="1.2" stroke-linecap="round" stroke-linejoin="round"/></svg>
<div class="t" style="left:1618px;top:418.44px;font-size:13px;line-height:13px;color:#fff;font-weight:normal;font-family:'Liberation Sans', sans-serif;">Create Orders</div>
<svg style="left:1706px;top:418px" width="12.5" height="12.5" viewBox="0 0 12 12"><circle cx="6" cy="6" r="5.3" fill="none" stroke="#25b26b" stroke-width="1.1"/><path d="M3.6 6.3 L5.5 8.2 L8.8 4.6" fill="none" stroke="#25b26b" stroke-width="1.2" stroke-linecap="round" stroke-linejoin="round"/></svg>
<div class="t" style="left:1723.5px;top:418.44px;font-size:13px;line-height:13px;color:#fff;font-weight:normal;font-family:'Liberation Sans', sans-serif;">Cancel Orders</div>
<svg style="left:1572px;top:470px" width="20" height="21"><circle cx="10" cy="10.3" r="9.3" fill="none" stroke="#f0a30a" stroke-width="1.3"/><text x="10" y="14.3" font-family="Liberation Sans" font-size="11" fill="#f0a30a" text-anchor="middle">2</text></svg>
<div class="t" style="left:1601.3px;top:472.52px;font-size:16.3px;line-height:16.3px;color:#8d8f95;font-weight:bold;font-family:'Liberation Sans', sans-serif;">Auction: Phase 2</div>
<div class="r" style="left:1601px;top:493px;width:135px;height:0;border-top:1px dashed #5f6167"></div>
<div class="t" style="left:1601px;top:505.24px;font-size:13px;line-height:13px;color:#8d8f95;font-weight:normal;font-family:'Liberation Sans', sans-serif;">Starts on:</div>
<div class="t" style="left:1666.8px;top:505.19px;font-size:13.3px;line-height:13.3px;color:#8d8f95;font-weight:bold;font-family:'Liberation Sans', sans-serif;">7.30 UTC 07:50 - 7.30 UTC 07:55</div>
<svg style="left:1600.8px;top:531px" width="12.5" height="12.5" viewBox="0 0 12 12"><circle cx="6" cy="6" r="5.3" fill="none" stroke="#185a3a" stroke-width="1.1"/><path d="M3.6 6.3 L5.5 8.2 L8.8 4.6" fill="none" stroke="#185a3a" stroke-width="1.2" stroke-linecap="round" stroke-linejoin="round"/></svg>
<div class="t" style="left:1618px;top:531.24px;font-size:13px;line-height:13px;color:#8d8f95;font-weight:normal;font-family:'Liberation Sans', sans-serif;">Create Orders</div>
<svg style="left:1706px;top:531px" width="12.5" height="12.5" viewBox="0 0 12 12"><circle cx="6" cy="6" r="5.3" fill="none" stroke="#6a2a2e" stroke-width="1.1"/><path d="M4.2 4.2 L7.8 7.8 M7.8 4.2 L4.2 7.8" fill="none" stroke="#6a2a2e" stroke-width="1.2" stroke-linecap="round"/></svg>
<div class="t" style="left:1723.5px;top:531.24px;font-size:13px;line-height:13px;color:#8d8f95;font-weight:normal;font-family:'Liberation Sans', sans-serif;">Cancel Orders</div>
<svg style="left:1572px;top:582px" width="20" height="21"><circle cx="10" cy="10.2" r="9.3" fill="none" stroke="#f0a30a" stroke-width="1.3"/><text x="10" y="14.2" font-family="Liberation Sans" font-size="11" fill="#f0a30a" text-anchor="middle">3</text></svg>
<div class="t" style="left:1601.3px;top:584.02px;font-size:16.3px;line-height:16.3px;color:#8d8f95;font-weight:bold;font-family:'Liberation Sans', sans-serif;letter-spacing:0.45px;">Price Matching</div>
<div class="r" style="left:1601px;top:605px;width:122px;height:0;border-top:1px dashed #5f6167"></div>
<div class="t" style="left:1601px;top:617.44px;font-size:13px;line-height:13px;color:#8d8f95;font-weight:normal;font-family:'Liberation Sans', sans-serif;">Starts on:</div>
<div class="t" style="left:1666.3px;top:617.39px;font-size:13.3px;line-height:13.3px;color:#8d8f95;font-weight:bold;font-family:'Liberation Sans', sans-serif;">7.30 UTC 07:55 - 7.30 UTC 08:00</div>
<svg style="left:1600.8px;top:643px" width="12.5" height="12.5" viewBox="0 0 12 12"><circle cx="6" cy="6" r="5.3" fill="none" stroke="#6a2a2e" stroke-width="1.1"/><path d="M4.2 4.2 L7.8 7.8 M7.8 4.2 L4.2 7.8" fill="none" stroke="#6a2a2e" stroke-width="1.2" stroke-linecap="round"/></svg>
<div class="t" style="left:1618px;top:643.24px;font-size:13px;line-height:13px;color:#8d8f95;font-weight:normal;font-family:'Liberation Sans', sans-serif;">Create Orders</div>
<svg style="left:1706px;top:643px" width="12.5" height="12.5" viewBox="0 0 12 12"><circle cx="6" cy="6" r="5.3" fill="none" stroke="#6a2a2e" stroke-width="1.1"/><path d="M4.2 4.2 L7.8 7.8 M7.8 4.2 L4.2 7.8" fill="none" stroke="#6a2a2e" stroke-width="1.2" stroke-linecap="round"/></svg>
<div class="t" style="left:1723.5px;top:643.24px;font-size:13px;line-height:13px;color:#8d8f95;font-weight:normal;font-family:'Liberation Sans', sans-serif;">Cancel Orders</div>
<svg style="left:1600.8px;top:669px" width="12.5" height="12.5" viewBox="0 0 12 12"><circle cx="6" cy="6" r="5.3" fill="none" stroke="#185a3a" stroke-width="1.1"/><path d="M3.6 6.3 L5.5 8.2 L8.8 4.6" fill="none" stroke="#185a3a" stroke-width="1.2" stroke-linecap="round" stroke-linejoin="round"/></svg>
<div class="t" style="left:1618px;top:669.24px;font-size:13px;line-height:13px;color:#8d8f95;font-weight:normal;font-family:'Liberation Sans', sans-serif;">Check Order Status Once the Session Ends</div>
<div class="r" style="left:1559px;top:792px;width:336px;height:1px;background:#26282d;"></div>
<div class="r" style="left:1557.4px;top:707.4px;width:334.8px;height:70px;box-sizing:border-box;border:5px solid #f24b4b;border-radius:10px;"></div>
<div class="r" style="left:1572px;top:719.8px;width:311px;height:45.2px;background:#f7a600;border-radius:6px;"></div>
<div class="t" style="left:1727.4px;transform:translateX(-50%);top:735.30px;font-size:16.4px;line-height:16.4px;color:#0e0e12;font-weight:normal;font-family:'Liberation Sans', sans-serif;-webkit-text-stroke:0.25px #0e0e12;">Join Auction Now</div>
<svg style="left:0;top:0" width="1895" height="807"><path d="M1423 650 L1515 697.7 L1522 690 L1545 725.5 L1502 723 L1505 715.5 L1420 654.5 Z" fill="#f24b4b" stroke="#f24b4b" stroke-width="3" stroke-linejoin="round"/></svg>
</body></html>
